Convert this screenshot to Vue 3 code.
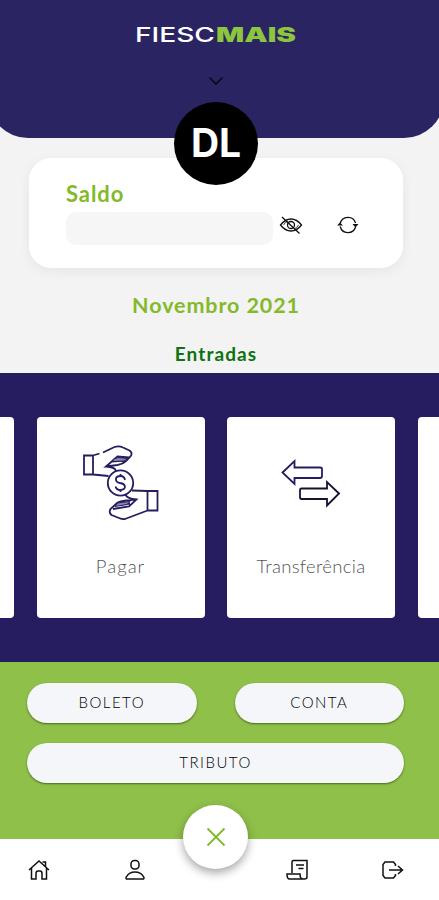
<template>
  <div class="app">
    <header class="top">
      <svg class="logo" width="170" height="36" viewBox="0 0 170 36">
        <text x="4" y="25" class="logo-a" textLength="80" lengthAdjust="spacingAndGlyphs">FIESC</text>
        <text x="85" y="25" class="logo-b" textLength="80" lengthAdjust="spacingAndGlyphs">MAIS</text>
      </svg>
      <svg class="chevron" width="16" height="10" viewBox="0 0 16 10">
        <path d="M1.500 1.500 8 8 14.500 1.500" />
      </svg>
      <div class="avatar">DL</div>
    </header>

    <section class="summary">
      <div class="balance">
        <div class="balance-title">Saldo</div>
        <div class="balance-row">
          <div class="amount"></div>
          <button class="icon-btn eye" @click="hidden = !hidden">
            <svg width="24" height="20" viewBox="0 0 24 20">
              <path d="M1.500 10C5 5.500 8.500 4 12 4S19 5.500 22.500 10C19 14.500 15.500 16 12 16S5 14.500 1.500 10Z" />
              <path d="M4.500 10Q6 7 9 6M19.500 10Q18 13 15 14" class="thin" />
              <circle cx="12" cy="10" r="3.500" />
              <path d="M3 2 20.500 18.500" />
            </svg>
          </button>
          <button class="icon-btn">
            <svg width="22" height="20" viewBox="0 0 22 20">
              <path d="M3.200 8.500A8 8 0 0 1 18.600 8M18.600 12A8 8 0 0 1 3.200 11.500" />
              <path d="M0 10.500 3 7.500 6 10.500ZM15.500 9 18.500 12.500 21.500 9Z" class="solid" />
            </svg>
          </button>
        </div>
      </div>
      <div class="month">Novembro 2021</div>
      <div class="entries">Entradas</div>
    </section>

    <section class="carousel">
      <div class="card"></div>
      <div class="card">
        <svg class="card-icon" width="78" height="78" viewBox="0 0 78 78">
          <path d="M2 12.500H11V31.500H2ZM11 12.500 17.500 10.500M21 9.500 32.500 4Q37 2.500 41 4.500L47.500 7.500Q51 10 48.500 13.500L44 18Q41 21 35.500 22L24 23.500 35.500 13.500 47 14.500M24 23.500Q33 24 34 28M11 31.500 26.500 33M30 18.500 42 17.500" />
          <path d="M31 16.500 36 14.500 46 15.500 42 18 31 18.500Z" class="finger" />
          <circle cx="38.500" cy="40" r="12.700" />
          <path d="M65.500 48H75.500V67.500H65.500ZM65.500 48 50 47.500M43.500 51.500Q44.500 55.500 54.500 56.500L47 63.500 31 66M65.500 67.500 43 76Q40.500 76.500 37 75L29.500 72Q26.500 69.500 28.500 66L35.500 59.500Q41 57.500 54.500 56.500M34 62 48 60.500" />
          <path d="M35.500 60 48 58.500 45 61.500 33 63.500Z" class="finger" />
          <path d="M43 37C42.500 34 41 33 38.500 33 32.500 33 32.500 39 38 40 44.500 41 44.500 47 38.500 47 35.500 47 34 45.500 33.500 43.500M38.500 31V33M38.500 47V49" />
        </svg>
        <span class="card-label pay">Pagar</span>
      </div>
      <div class="card">
        <svg class="card-icon" width="78" height="78" viewBox="0 0 78 78">
          <path d="M10.500 29.500 22.500 18V24.500H48Q50 24.500 50 26V33Q50 35 48 35H22.500V41Z" />
          <path d="M67 50.500 55 39V45.500H29.500Q28 45.500 28 47V54Q28 56 29.500 56H55V62.500Z" class="dark" />
        </svg>
        <span class="card-label transfer">Transferência</span>
      </div>
      <div class="card"></div>
    </section>

    <section class="options">
      <button v-for="o in options" :key="o" class="pill">{{ o }}</button>
    </section>

    <nav class="tabs">
      <button class="tab">
        <svg width="22" height="22" viewBox="0 0 22 22">
          <path d="M1 11 11 2 21 11M3.500 9V20H8V14.500Q8 12 10 12H12Q14 12 14 14.500V20H18.500V9M14.500 3H17.500V7.500" />
        </svg>
      </button>
      <button class="tab">
        <svg width="22" height="22" viewBox="0 0 22 22">
          <rect x="7" y="1.500" width="8" height="8.500" rx="3.500" />
          <path d="M2.500 20C1.500 19.500 2 18 3 17 6 11.500 16 11.500 19 17 20 18 20.500 19.500 19.500 20Z" />
        </svg>
      </button>
      <button class="tab statement">
        <svg width="24" height="22" viewBox="0 0 24 22">
          <path d="M6 14V3Q6 1.500 7.500 1.500H21V18Q21 20 18.500 20H3.500Q1 20 1 15H14Q14 20 17 20M10 6H18M12.500 9.500H17.500" />
        </svg>
      </button>
      <button class="tab">
        <svg width="22" height="22" viewBox="0 0 22 22">
          <path d="M13.500 7V5.500L11.500 3H3L1 5.500V16.500L3 19H11.500L13.500 16.500V15M7 11H20M16 7 20.500 11 16 15" />
        </svg>
      </button>
      <button class="close">
        <svg width="20" height="20" viewBox="0 0 20 20">
          <path d="M1.500 1.500 18.500 18.500M18.500 1.500 1.500 18.500" />
        </svg>
      </button>
    </nav>
  </div>
</template>

<script setup>
import { ref } from 'vue';
const hidden = ref(true);
const options = ['BOLETO', 'CONTA', 'TRIBUTO'];
</script>

<style>
body {
  margin: 0;
  overflow: hidden;
}
</style>

<style scoped>
.app {
  width: 439px;
  height: 900px;
  display: flex;
  flex-direction: column;
  overflow: hidden;
  background: #f3f3f3;
  font-family: Lato, "Liberation Sans", sans-serif;
}
button {
  border: none;
  background: none;
  padding: 0;
  font-family: inherit;
}
svg {
  display: block;
  fill: none;
  stroke: #111;
  stroke-width: 1.5;
}
.top {
  position: relative;
  z-index: 1;
  flex: none;
  height: 138px;
  width: 456px;
  margin-left: -12px;
  border-radius: 0 0 40px 40px;
  background: #2b2463;
  display: flex;
  flex-direction: column;
  align-items: center;
}
.logo {
  margin-top: 17px;
  stroke: none;
}
.logo text {
  font-family: Inter, sans-serif;
  font-size: 20px;
}
.logo-a {
  fill: #fff;
  font-weight: 500;
}
.logo-b {
  fill: #8cc63f;
  font-weight: 900;
}
.chevron {
  margin-top: 23px;
  stroke: #0a0918;
  stroke-width: 1.6;
}
.avatar {
  position: absolute;
  top: 102px;
  left: 186px;
  width: 84px;
  height: 83px;
  border-radius: 50%;
  background: #000;
  color: #fff;
  font-family: Inter, sans-serif;
  font-size: 39px;
  font-weight: 700;
  line-height: 82px;
  text-align: center;
}
.summary {
  flex: none;
  height: 235px;
  width: 432px;
  display: flex;
  flex-direction: column;
  align-items: center;
}
.balance {
  box-sizing: border-box;
  width: 374px;
  height: 110px;
  margin-top: 20px;
  padding: 22px 37px 0;
  border-radius: 22px;
  background: #fff;
  box-shadow: 0 3px 12px rgba(0, 0, 0, 0.06);
}
.balance-title {
  height: 32px;
  line-height: 28px;
  font-size: 22px;
  font-weight: 700;
  letter-spacing: 0.9px;
  color: #84b92a;
}
.balance-row {
  display: flex;
  align-items: flex-start;
}
.amount {
  width: 207px;
  height: 33px;
  border-radius: 10px;
  background: #f6f6f6;
}
.icon-btn {
  margin-top: 3px;
  margin-left: 6px;
}
.icon-btn svg {
  stroke-width: 1.3;
}
.icon-btn.eye {
  margin-right: 28px;
}
.icon-btn .thin {
  stroke-width: 0.8;
}
.icon-btn .solid {
  fill: #111;
  stroke: none;
}
.month {
  margin-top: 23px;
  line-height: 28px;
  font-size: 21.500px;
  font-weight: 700;
  letter-spacing: 0.9px;
  color: #84b92a;
}
.entries {
  margin-top: 22px;
  line-height: 26px;
  font-size: 19px;
  font-weight: 700;
  letter-spacing: 1.1px;
  color: #0d720f;
}
.carousel {
  flex: none;
  box-sizing: border-box;
  height: 289px;
  padding-top: 44px;
  background: #261d60;
  display: flex;
  gap: 22.500px;
  margin-left: -154px;
  width: 760px;
}
.card {
  flex: none;
  width: 168px;
  height: 201px;
  border-radius: 4px;
  background: #fff;
  display: flex;
  flex-direction: column;
  align-items: center;
}
.card-icon {
  margin-top: 26px;
  stroke: #241d5e;
  stroke-width: 1.8;
}
.card-icon .dark {
  stroke: #16132f;
}
.card-icon .finger {
  fill: #8c89a8;
  stroke-width: 1;
}
.card-label {
  margin-top: 33px;
  line-height: 24px;
  font-size: 18.500px;
  font-weight: 300;
  letter-spacing: 0.3px;
  color: #555;
}
.card-label.pay {
  letter-spacing: 1px;
}
.options {
  flex: none;
  box-sizing: border-box;
  width: 439px;
  height: 177px;
  padding: 21px 35px 0 27px;
  background: #8fc04a;
  display: grid;
  grid-template-columns: 1fr 1fr;
  grid-auto-rows: 40px;
  gap: 20px 38px;
}
.pill {
  border-radius: 20px;
  background: #f4f6fa;
  box-shadow: 0 1px 2px rgba(40, 70, 0, 0.7);
  font-size: 15px;
  font-weight: 300;
  letter-spacing: 1.500px;
  line-height: 36px;
  padding-bottom: 3px;
  color: #000;
}
.pill:last-child {
  grid-column: 1 / 3;
}
.tabs {
  position: relative;
  flex: 1;
  background: #fff;
  display: flex;
  align-items: flex-start;
  padding-left: 28px;
  gap: 74px;
}
.tab {
  flex: none;
  width: 22px;
  margin-top: 20px;
}
.tab.statement {
  margin-left: 66px;
}
.close {
  position: absolute;
  left: 183px;
  top: -34px;
  width: 65px;
  height: 64px;
  border-radius: 50%;
  background: #fff;
  box-shadow: 0 4px 10px rgba(0, 0, 0, 0.35);
  display: flex;
  align-items: center;
  justify-content: center;
}
.close svg {
  stroke: #7db928;
  stroke-width: 1.8;
}
</style>
